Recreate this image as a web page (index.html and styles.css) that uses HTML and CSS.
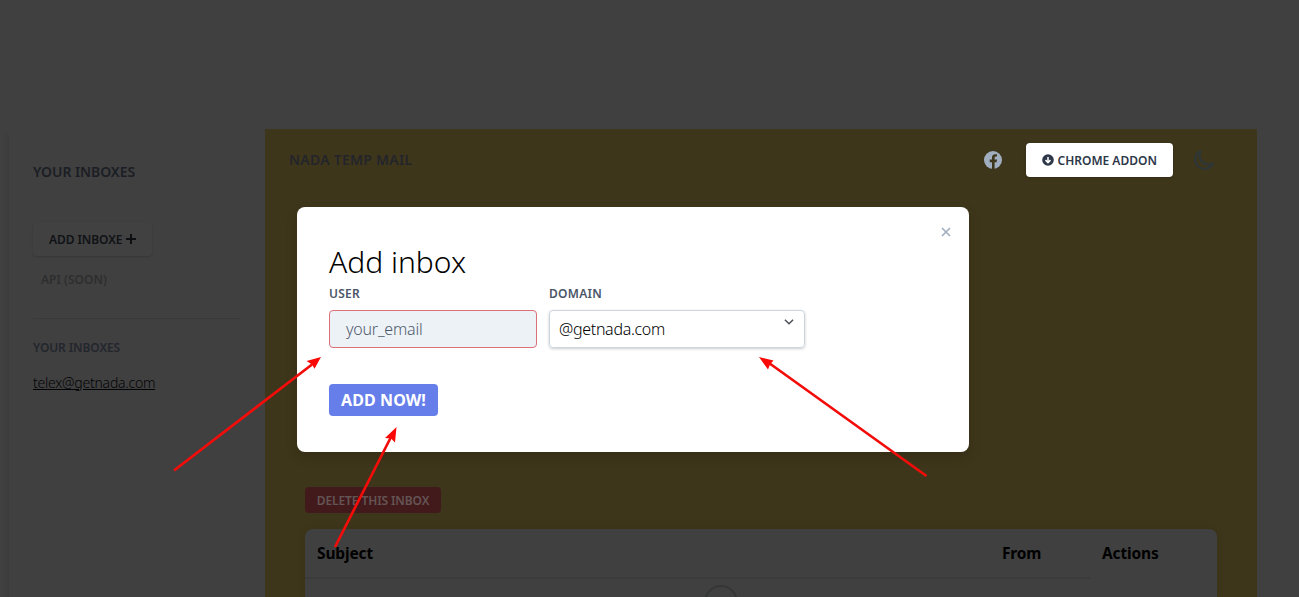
FILE: index.html
```html
<!DOCTYPE html>
<html lang="en">
<head>
<meta charset="utf-8">
<title>Nada Temp Mail</title>
<link rel="stylesheet" href="styles.css">
</head>
<body>
<div class="page">
  <aside class="sidebar">
    <h2 class="side-title">YOUR INBOXES</h2>
    <button class="add-inbox"><span>ADD INBOXE</span>
      <svg width="10" height="10" viewBox="0 0 10 10"><path d="M5 0.5v9M0.5 5h9" stroke="#0c0d11" stroke-width="1.9" stroke-linecap="round"/></svg>
    </button>
    <div class="api">API (SOON)</div>
    <hr class="rule">
    <h3 class="side-sub">YOUR INBOXES</h3>
    <a class="address">telex@getnada.com</a>
  </aside>
  <main class="main">
    <header class="topbar">
      <h1 class="brand">NADA TEMP MAIL</h1>
      <svg class="facebook" width="18" height="18" viewBox="0 0 18 18"><circle cx="9" cy="9" r="9" fill="#a0aec0"/><path d="M8 18v-6.800H5.700V8.600H8v-2C8 4.400 9.300 3.200 11.300 3.200c.9 0 1.700.1 1.700.1v2.100h-1c-1 0-1.400.6-1.400 1.300v1.900h2.400l-.4 2.600h-2V18z" fill="#3e361a"/></svg>
      <button class="chrome">
        <svg width="12" height="12" viewBox="0 0 12 12"><circle cx="6" cy="6" r="5.800" fill="#2d3748"/><path d="M6 3v5.500M3.500 6.100 6 8.600l2.500-2.500" fill="none" stroke="#fff" stroke-width="1.500"/></svg>
        <span>CHROME ADDON</span>
      </button>
      <svg class="moon" width="22" height="22" viewBox="0 0 22 22"><path d="M7.500 2.200A9.300 9.300 0 1 0 20 14.400 9.200 9.200 0 0 1 7.500 2.200z" fill="none" stroke="#2f3637" stroke-width="2.300" stroke-linejoin="round"/></svg>
    </header>
    <section class="mailbox">
      <button class="delete">DELETE THIS INBOX</button>
      <div class="mail-table">
        <div class="head">Subject</div>
        <div class="head">From</div>
        <div class="actions">Actions</div>
        <div class="loading"><i class="spinner"></i></div>
      </div>
    </section>
  </main>
</div>
<div class="modal">
  <svg class="close" width="10" height="10" viewBox="0 0 10 10"><path d="M1 1l8 8M9 1L1 9" stroke="#a0aec0" stroke-width="1.700"/></svg>
  <h2 class="modal-title">Add inbox</h2>
  <div class="fields">
    <label class="field user"><span class="label">USER</span><span class="input">your_email</span></label>
    <label class="field domain"><span class="label">DOMAIN</span><span class="select"><span>@getnada.com</span>
      <svg width="10" height="6" viewBox="0 0 10 6"><path d="M.9.800 5 4.800 9.100.8" fill="none" stroke="#4a5058" stroke-width="1.500"/></svg></span></label>
  </div>
  <button class="submit">ADD NOW!</button>
</div>
<svg class="arrows" width="1299" height="597" viewBox="0 0 1299 597">
  <g stroke="#f20d0a" stroke-width="2.700"><path d="M174 470.500 312 364.500M335 547 391 437M926.500 476 769 363"/></g>
  <g fill="#fa0805"><path d="M321 357 314.500 368.800 312 364.500 306.500 361z"/><path d="M396.500 427 395 442.500 391 438.500 385 438z"/><path d="M759 357 773.500 360.500 770 364.500 768 369.500z"/></g>
</svg>
</body>
</html>
```
FILE: styles.css
```css
* { box-sizing: border-box; }
body { margin: 0; width: 1299px; height: 597px; overflow: hidden; position: relative; background: #404040; font-family: "Noto Sans", "Open Sans", sans-serif; color: #000; }
h1, h2, h3 { margin: 0; }
button { font: inherit; border: 0; padding: 0; }
svg { flex: none; display: block; }
.page { display: flex; height: 597px; padding: 129px 42px 0 9px; }
.sidebar { width: 256px; padding: 32px 24px; box-shadow: -2px 6px 5px rgba(0, 0, 0, .08); display: flex; flex-direction: column; align-items: flex-start; }
.side-title { font-size: 14px; line-height: 22px; font-weight: 600; letter-spacing: -.08px; color: #1b1e24; }
.add-inbox { margin-top: 39px; width: 119px; height: 34px; padding-left: 16px; display: flex; align-items: center; gap: 4px; background: #414141; border-radius: 4px; box-shadow: 0 1px 2px rgba(0, 0, 0, .15); color: #101216; font-size: 12px; font-weight: 600; letter-spacing: -.08px; }
.api { margin: 14px 0 0 8px; font-size: 12px; line-height: 20px; font-weight: 600; color: #2e2e2f; }
.rule { width: 208px; height: 1px; margin: 28px 0 0; border: 0; background: #393a3b; }
.side-sub { margin-top: 19px; font-size: 12px; line-height: 20px; font-weight: 600; letter-spacing: -.1px; color: #23262d; }
.address { margin-top: 15px; font-size: 14px; line-height: 20px; font-weight: 350; letter-spacing: -.23px; text-decoration: underline; color: #030405; }
.main { flex: 1; background: #3e361a; padding: 14px 40px 0; display: flex; flex-direction: column; }
.topbar { display: flex; align-items: center; height: 34px; margin-left: -16px; }
.brand { font-size: 14px; line-height: 20px; font-weight: 600; letter-spacing: .25px; color: #23252b; flex: 1; }
.chrome { width: 147px; height: 34px; margin: 0 20px 0 24px; padding-left: 16px; display: flex; align-items: center; gap: 3.500px; background: #fff; border-radius: 4px; color: #2d3748; font-size: 12px; font-weight: 600; box-shadow: 0 1px 3px rgba(0, 0, 0, .2); }
.moon { margin-right: 2px; }
.mailbox { margin-top: 310px; display: flex; flex-direction: column; align-items: flex-start; flex: 1; }
.delete { width: 136px; height: 26px; border-radius: 4px; background: #421a1b; color: #655455; font-size: 12px; font-weight: 600; letter-spacing: -.1px; }
.mail-table { margin-top: 16px; width: 912px; flex: 1; background: #404040; border-radius: 8px 8px 0 0; display: grid; grid-template-columns: 685px 100px 127px; grid-template-rows: 50px 1fr; font-size: 15.500px; font-weight: 700; letter-spacing: -.15px; overflow: hidden; box-shadow: 0 0 8px rgba(0, 0, 0, .08); }
.head { padding: 12px; line-height: 24px; border-bottom: 2px solid #3a3b3b; }
.actions { padding: 12px; line-height: 24px; }
.loading { grid-column: 1 / -1; padding: 6px 0 0 399px; height: 18px; overflow: hidden; }
.spinner { display: block; width: 34px; height: 34px; border: 2px solid #353637; border-radius: 50%; }
.modal { position: absolute; left: 297px; top: 207px; width: 672px; height: 245px; padding: 32px; background: #fff; border-radius: 8px; box-shadow: 0 5px 12px rgba(0, 0, 0, .15); }
.close { position: absolute; right: 18px; top: 20px; }
.modal-title { margin-bottom: 1px; font-size: 30px; line-height: 45px; font-weight: 300; }
.fields { display: flex; gap: 12px; }
.field { display: flex; flex-direction: column; gap: 8px; }
.user { width: 208px; }
.domain { width: 256px; }
.label { font-size: 12px; line-height: 17px; font-weight: 600; letter-spacing: .25px; color: #4a5568; }
.input { height: 38px; border: 1px solid #db7079; border-radius: 4px; background: #edf2f7; padding: 0 16px; font-size: 16px; line-height: 37px; font-weight: 350; letter-spacing: -.22px; color: #4f5a6b; }
.select { height: 38px; border: 1px solid #cbd5e0; border-radius: 4px; padding: 0 10px 0 9px; font-size: 16px; line-height: 37px; font-weight: 350; letter-spacing: -.3px; display: flex; justify-content: space-between; box-shadow: 0 1px 3px rgba(0, 0, 0, .2); }
.select svg { margin-top: 8px; }
.submit { display: block; margin-top: 36px; width: 109px; height: 32px; border-radius: 4px; background: #667eea; color: #fff; font-size: 16px; font-weight: 700; letter-spacing: .1px; }
.arrows { position: absolute; left: 0; top: 0; pointer-events: none; }
```
